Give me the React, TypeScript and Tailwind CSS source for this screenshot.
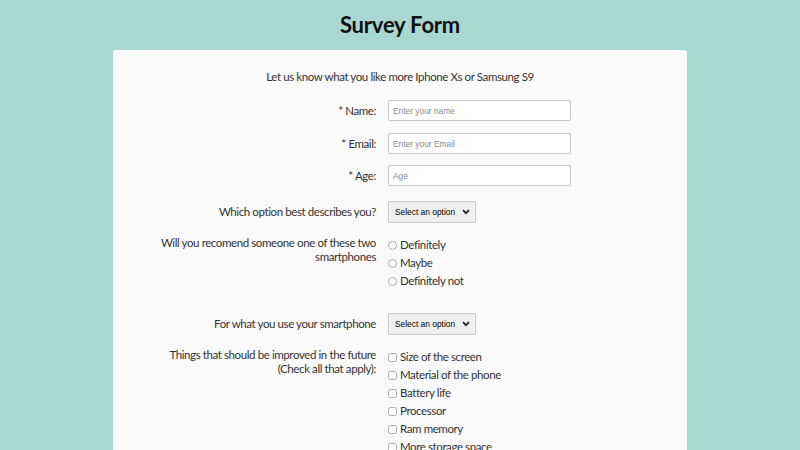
const textCls = "text-[11.5px] leading-[14px] tracking-[-0.4px] text-[#333]";
const inputCls =
  "block w-[183px] h-[21px] border border-[#c8c8c8] rounded-[2px] bg-white px-[4px] text-[8.4px] font-['Liberation_Sans',sans-serif] placeholder:text-[#8a8a8a] outline-none";

function Select() {
  return (
    <div className="relative w-[88px]">
      <select className="block h-[22px] w-full appearance-none border border-[#c8c8c8] rounded-[2px] bg-[#efefef] pl-[6px] pr-[14px] text-[8.4px] text-black font-['Liberation_Sans',sans-serif] outline-none">
        <option>Select an option</option>
      </select>
      <svg
        className="pointer-events-none absolute right-[6px] top-[8px] h-[6px] w-[8px]"
        viewBox="0 0 8 6"
        fill="none"
        stroke="#222"
        strokeWidth={1.8}
      >
        <path d="M1 1.2 4 4.2 7 1.2" />
      </svg>
    </div>
  );
}

function Row({
  label,
  children,
  center = false,
  className = "",
}: {
  label: React.ReactNode;
  children: React.ReactNode;
  center?: boolean;
  className?: string;
}) {
  return (
    <div className={`flex gap-3 ${center ? "items-center" : "items-start"} ${className}`}>
      <div className={`w-[263px] shrink-0 text-right ${textCls}`}>{label}</div>
      <div className="flex flex-col">{children}</div>
    </div>
  );
}

function Choice({ type, name, text }: { type: "radio" | "checkbox"; name: string; text: string }) {
  return (
    <label className={`flex h-[18px] items-center gap-[3px] ${textCls}`}>
      <input type={type} name={name} className="m-0 h-[9px] w-[9px] opacity-60" />
      <span>{text}</span>
    </label>
  );
}

export default function App() {
  return (
    <div className="min-h-screen bg-[#a9d8d3] font-['Lato',sans-serif]">
      <h1 className="pt-[11px] text-center text-[22px] font-bold leading-[28px] tracking-[-0.2px] text-[#111]">
        Survey Form
      </h1>
      <div className="mx-auto mt-[11px] w-[574px] rounded-[3px] bg-[#fafafa] pb-8 pt-[20px]">
        <p className={`text-center ${textCls}`}>Let us know what you like more Iphone Xs or Samsung S9</p>
        <Row label="* Name:" center className="mt-[16px]">
          <input className={inputCls} placeholder="Enter your name" />
        </Row>
        <Row label="* Email:" center className="mt-[12px]">
          <input className={inputCls} placeholder="Enter your Email" />
        </Row>
        <Row label="* Age:" center className="mt-[11px]">
          <input className={inputCls} placeholder="Age" />
        </Row>
        <Row label="Which option best describes you?" center className="mt-[15px]">
          <Select />
        </Row>
        <Row
          label={
            <>
              Will you recomend someone one of these two
              <br />
              smartphones
            </>
          }
          className="mt-[13px]"
        >
          <Choice type="radio" name="rec" text="Definitely" />
          <Choice type="radio" name="rec" text="Maybe" />
          <Choice type="radio" name="rec" text="Definitely not" />
        </Row>
        <Row label="For what you use your smartphone" center className="mt-[23px]">
          <Select />
        </Row>
        <Row
          label={
            <>
              Things that should be improved in the future
              <br />
              (Check all that apply):
            </>
          }
          className="mt-[13px]"
        >
          <Choice type="checkbox" name="imp" text="Size of the screen" />
          <Choice type="checkbox" name="imp" text="Material of the phone" />
          <Choice type="checkbox" name="imp" text="Battery life" />
          <Choice type="checkbox" name="imp" text="Processor" />
          <Choice type="checkbox" name="imp" text="Ram memory" />
          <Choice type="checkbox" name="imp" text="More storage space" />
        </Row>
      </div>
    </div>
  );
}
